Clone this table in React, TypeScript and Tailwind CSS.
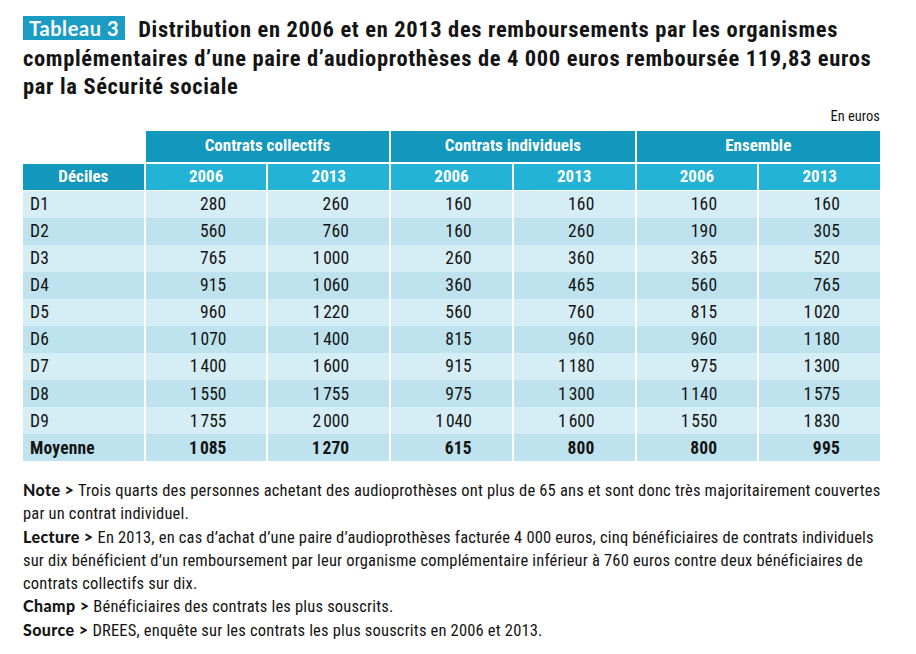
import React from 'react'

const COND = "font-['Roboto_Condensed','Roboto',sans-serif]"

type Row = { label: string; values: string[]; bold?: boolean }

const ROWS: Row[] = [
  { label: 'D1', values: ['280', '260', '160', '160', '160', '160'] },
  { label: 'D2', values: ['560', '760', '160', '260', '190', '305'] },
  { label: 'D3', values: ['765', '1\u202f000', '260', '360', '365', '520'] },
  { label: 'D4', values: ['915', '1\u202f060', '360', '465', '560', '765'] },
  { label: 'D5', values: ['960', '1\u202f220', '560', '760', '815', '1\u202f020'] },
  { label: 'D6', values: ['1\u202f070', '1\u202f400', '815', '960', '960', '1\u202f180'] },
  { label: 'D7', values: ['1\u202f400', '1\u202f600', '915', '1\u202f180', '975', '1\u202f300'] },
  { label: 'D8', values: ['1\u202f550', '1\u202f755', '975', '1\u202f300', '1\u202f140', '1\u202f575'] },
  { label: 'D9', values: ['1\u202f755', '2\u202f000', '1\u202f040', '1\u202f600', '1\u202f550', '1\u202f830'] },
  { label: 'Moyenne', values: ['1\u202f085', '1\u202f270', '615', '800', '800', '995'], bold: true },
]

const GROUPS = ['Contrats collectifs', 'Contrats individuels', 'Ensemble']

const NOTES: { key: string; lines: string[] }[] = [
  {
    key: 'Note',
    lines: [
      'Trois quarts des personnes achetant des audioprothèses ont plus de 65 ans et sont donc très majoritairement couvertes',
      'par un contrat individuel.',
    ],
  },
  {
    key: 'Lecture',
    lines: [
      'En 2013, en cas d’achat d’une paire d’audioprothèses facturée 4 000 euros, cinq bénéficiaires de contrats individuels',
      'sur dix bénéficient d’un remboursement par leur organisme complémentaire inférieur à 760 euros contre deux bénéficiaires de',
      'contrats collectifs sur dix.',
    ],
  },
  { key: 'Champ', lines: ['Bénéficiaires des contrats les plus souscrits.'] },
  { key: 'Source', lines: ['DREES, enquête sur les contrats les plus souscrits en 2006 et 2013.'] },
]

export default function App() {
  return (
    <div className={`w-[916px] h-[654px] bg-white pl-[23px] pr-[36px] pt-[15px] text-[#141414] ${COND}`}>
      {/* Title */}
      <h1 className="text-[22.5px] font-bold leading-[28.5px] tracking-[0.65px] whitespace-nowrap">
        <span className="inline-block h-[24px] px-[6px] mr-[13px] bg-[#1b9cc3] text-white font-['Lato',sans-serif] text-[20px] font-bold leading-[24px] tracking-[0.6px] align-[1px]">
          Tableau 3
        </span>
        Distribution en 2006 et en 2013 des remboursements par les organismes
        <br />
        complémentaires d’une paire d’audioprothèses de 4 000 euros remboursée 119,83 euros
        <br />
        par la Sécurité sociale
      </h1>

      <div className="mt-[6px] text-right text-[14.5px] leading-[20px]">En euros</div>

      {/* Table */}
      <div className="mt-[4px] text-[17px]">
        <div className="grid grid-cols-7 gap-x-[2px] h-[31px]">
          <div />
          {GROUPS.map((g) => (
            <div
              key={g}
              className="col-span-2 flex items-center justify-center bg-[#1297bd] text-white font-bold"
            >
              {g}
            </div>
          ))}
        </div>
        <div className="mt-[2px] grid grid-cols-7 gap-x-[2px] h-[26px]">
          <div className="flex items-center justify-center bg-[#1297bd] text-white font-bold">Déciles</div>
          {['2006', '2013', '2006', '2013', '2006', '2013'].map((y, i) => (
            <div key={i} className="flex items-center justify-center bg-[#22b3d6] text-white font-bold">
              {y}
            </div>
          ))}
        </div>
        <div className="mt-[1px] text-[17.5px] tracking-[0.2px]">
          {ROWS.map((r, i) => (
            <div
              key={r.label}
              className={`grid grid-cols-7 gap-x-[2px] h-[27.1px] ${r.bold ? 'font-bold' : ''}`}
            >
              <div className={`flex items-center pl-[7px] ${i % 2 === 0 ? 'bg-[#d5edf5]' : 'bg-[#bee3ee]'}`}>
                {r.label}
              </div>
              {r.values.map((v, j) => (
                <div
                  key={j}
                  className={`flex items-center justify-end pr-[40px] ${i % 2 === 0 ? 'bg-[#d5edf5]' : 'bg-[#bee3ee]'}`}
                >
                  {v}
                </div>
              ))}
            </div>
          ))}
        </div>
      </div>

      {/* Notes */}
      <div className="mt-[18px] text-[16.5px] leading-[22.8px] tracking-[0.18px]">
        {NOTES.map((n) => (
          <p key={n.key} className="whitespace-nowrap">
            <span className="font-['Lato',sans-serif] font-black text-[16px] tracking-[0.4px]">{n.key} &gt;</span>{' '}
            {n.lines.map((l, k) => (
              <React.Fragment key={k}>
                {k > 0 && <br />}
                {l}
              </React.Fragment>
            ))}
          </p>
        ))}
      </div>
    </div>
  )
}
